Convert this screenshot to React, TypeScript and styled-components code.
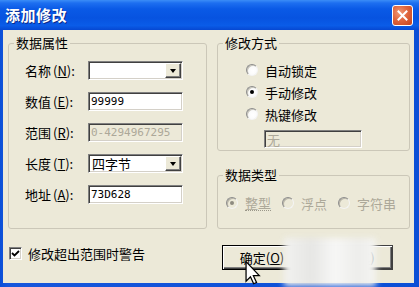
import React from "react";
import styled, { createGlobalStyle } from "styled-components";

const GlobalStyle = createGlobalStyle`
  html, body {
    margin: 0;
    padding: 0;
    background: #fff;
  }
  body {
    font-family: "Noto Sans CJK SC", "DejaVu Sans", sans-serif;
  }
`;

const Window = styled.div`
  position: relative;
  width: 419px;
  height: 287px;
  display: flex;
  flex-direction: column;
  background: linear-gradient(90deg, #0a4fd8 0%, #1656dc 2%, #0b4fd6 100%);
  overflow: hidden;
`;

const TitleBar = styled.div`
  flex: none;
  height: 30px;
  display: flex;
  align-items: center;
  justify-content: space-between;
  padding: 0 6px 0 5px;
  box-sizing: border-box;
  background: linear-gradient(
    180deg,
    #3b8df7 0%,
    #1d6ff0 10%,
    #0a5ae6 30%,
    #0753e0 60%,
    #0a5ce8 85%,
    #0648d2 100%
  );
`;

const Title = styled.span`
  color: #fff;
  font-size: 15px;
  font-weight: 700;
  letter-spacing: 0.5px;
  text-shadow: 1px 1px 0 #0a2a8a;
  line-height: 30px;
`;

const CloseButton = styled.div`
  width: 21px;
  height: 21px;
  box-sizing: border-box;
  border: 1px solid #fff;
  border-radius: 3px;
  display: flex;
  align-items: center;
  justify-content: center;
  background: radial-gradient(circle at 35% 35%, #f09a78 0%, #e0663e 45%, #c5411c 100%);
`;

const Body = styled.div`
  flex: 1;
  margin: 0 5px 4px 3px;
  padding: 5px 0 0 5px;
  background: #ece9d8;
  display: grid;
  grid-template-columns: 199px 193px;
  column-gap: 10px;
  align-items: start;
`;

const Column = styled.div`
  display: flex;
  flex-direction: column;
`;

const Group = styled.fieldset<{ $h: number; $mt?: number }>`
  margin: ${(p) => p.$mt ?? 0}px 0 0 0;
  padding: 0;
  height: ${(p) => p.$h}px;
  box-sizing: border-box;
  border: 1px solid #cbc7b8;
  border-radius: 3px;
  min-width: 0;
`;

const Legend = styled.legend`
  margin-left: 5px;
  padding: 0 2px;
  font-size: 13px;
  line-height: 16px;
  color: #000;
`;

const FieldGrid = styled.div`
  display: grid;
  grid-template-columns: 63px 95px;
  grid-auto-rows: 19px;
  row-gap: 12px;
  padding: 10px 0 0 16px;
  align-items: center;
`;

const Label = styled.label`
  font-size: 13px;
  line-height: 19px;
  color: #000;
  white-space: nowrap;
`;

const Mnemonic = styled.span`
  margin-left: 2px;
`;

const Field = styled.div<{ $disabled?: boolean }>`
  position: relative;
  height: 19px;
  box-sizing: border-box;
  border: 1px solid;
  border-color: #808080 #fff #fff #808080;
  box-shadow: inset 1px 1px 0 #404040, inset -1px -1px 0 #d4d0c8;
  background: ${(p) => (p.$disabled ? "#ece9d8" : "#fff")};
  display: flex;
  align-items: center;
  padding-left: 2px;
  font-family: "DejaVu Sans Mono", "Liberation Mono", monospace;
  font-size: 11px;
  color: ${(p) => (p.$disabled ? "#aca899" : "#000")};
`;

const ComboText = styled.span`
  flex: 1;
  font-family: "Noto Sans CJK SC", sans-serif;
  font-size: 13px;
  line-height: 17px;
  padding-left: 1px;
`;

const DropButton = styled.div`
  flex: none;
  width: 16px;
  height: 15px;
  margin-right: 1px;
  box-sizing: border-box;
  background: #ece9d8;
  border: 1px solid;
  border-color: #fff #404040 #404040 #fff;
  box-shadow: inset -1px -1px 0 #808080;
  display: flex;
  align-items: center;
  justify-content: center;
`;

const Arrow = styled.span`
  width: 0;
  height: 0;
  border-left: 3.5px solid transparent;
  border-right: 3.5px solid transparent;
  border-top: 4px solid #000;
`;

const CheckRow = styled.div`
  display: flex;
  align-items: center;
  gap: 6px;
  margin-top: 16px;
  padding-left: 1px;
  height: 16px;
  font-size: 13px;
  color: #000;
`;

const CheckBox = styled.span`
  width: 13px;
  height: 13px;
  box-sizing: border-box;
  border: 1px solid;
  border-color: #808080 #fff #fff #808080;
  box-shadow: inset 1px 1px 0 #404040, inset -1px -1px 0 #d4d0c8;
  background: #fff;
  display: flex;
  align-items: center;
  justify-content: center;
`;

const RadioList = styled.div`
  display: flex;
  flex-direction: column;
  gap: 6px;
  padding: 11px 0 0 28px;
`;

const RadioRow = styled.div<{ $disabled?: boolean }>`
  display: flex;
  align-items: center;
  gap: 7px;
  height: 16px;
  font-size: 13px;
  color: ${(p) => (p.$disabled ? "#aca899" : "#000")};
  white-space: nowrap;
`;

const RadioCircle = styled.span<{ $checked?: boolean; $disabled?: boolean }>`
  position: relative;
  flex: none;
  width: 12px;
  height: 12px;
  box-sizing: border-box;
  border-radius: 50%;
  border: 1px solid;
  border-color: #8d8d8d #f4f4f4 #f4f4f4 #8d8d8d;
  background: ${(p) =>
    p.$disabled
      ? "#ece9d8"
      : "radial-gradient(circle at 60% 60%, #fff 0%, #fafafa 55%, #e2e0d6 100%)"};
  box-shadow: inset 1px 1px 0 ${(p) => (p.$disabled ? "#b8b5a8" : "#c8c6bc")};

  &::after {
    content: "";
    display: ${(p) => (p.$checked ? "block" : "none")};
    position: absolute;
    left: 3px;
    top: 3px;
    width: 4px;
    height: 4px;
    border-radius: 50%;
    background: ${(p) => (p.$disabled ? "#8e8b80" : "#000")};
  }
`;

const HotkeyBox = styled(Field)`
  width: 98px;
  height: 18px;
  margin: 8px 0 0 46px;
  font-family: "Noto Sans CJK SC", sans-serif;
  font-size: 13px;
`;

const TypeRow = styled.div`
  display: flex;
  align-items: center;
  gap: 11px;
  padding: 12px 0 0 8px;
`;

const FocusText = styled.span`
  border-bottom: 1px dotted #9a978a;
  line-height: 14px;
`;

const ButtonRow = styled.div`
  display: flex;
  gap: 11px;
  margin-top: 16px;
  padding-left: 5px;
`;

const Button = styled.div<{ $default?: boolean }>`
  width: 80px;
  height: 25px;
  box-sizing: border-box;
  background: #ece9d8;
  border: 1px solid ${(p) => (p.$default ? "#000" : "#404040")};
  box-shadow: inset 1px 1px 0 #fff, inset -1px -1px 0 #404040,
    inset -2px -2px 0 #808080;
  display: flex;
  align-items: center;
  justify-content: center;
  font-size: 13px;
  color: #000;
  white-space: nowrap;
`;

const Smudge = styled.div`
  position: absolute;
  left: 284px;
  top: 238px;
  width: 92px;
  height: 48px;
  background: linear-gradient(
    90deg,
    #f2f2f0 0%,
    #e6e6e4 30%,
    #f7f7f6 55%,
    #ededeb 80%,
    #f4f4f2 100%
  );
  filter: blur(3px);
`;

const Cursor = styled.svg`
  position: absolute;
  left: 245px;
  top: 261px;
`;

const Mn = ({ k }: { k: string }) => (
  <Mnemonic>
    (<u>{k}</u>):
  </Mnemonic>
);

export default function App() {
  return (
    <>
      <GlobalStyle />
      <Window>
        <TitleBar>
          <Title>添加修改</Title>
          <CloseButton>
            <svg width="11" height="11" viewBox="0 0 11 11">
              <path
                d="M1.5 1.5 L9.5 9.5 M9.5 1.5 L1.5 9.5"
                stroke="#fff"
                strokeWidth="2"
                strokeLinecap="square"
              />
            </svg>
          </CloseButton>
        </TitleBar>

        <Body>
          <Column>
            <Group $h={194}>
              <Legend>数据属性</Legend>
              <FieldGrid>
                <Label>
                  名称<Mn k="N" />
                </Label>
                <Field>
                  <ComboText />
                  <DropButton>
                    <Arrow />
                  </DropButton>
                </Field>

                <Label>
                  数值<Mn k="E" />
                </Label>
                <Field>99999</Field>

                <Label>
                  范围<Mn k="R" />
                </Label>
                <Field $disabled>0-4294967295</Field>

                <Label>
                  长度<Mn k="T" />
                </Label>
                <Field>
                  <ComboText>四字节</ComboText>
                  <DropButton>
                    <Arrow />
                  </DropButton>
                </Field>

                <Label>
                  地址<Mn k="A" />
                </Label>
                <Field>73D628</Field>
              </FieldGrid>
            </Group>

            <CheckRow>
              <CheckBox>
                <svg width="9" height="9" viewBox="0 0 9 9">
                  <path d="M1 4 L3.5 6.5 L8 2" fill="none" stroke="#000" strokeWidth="1.8" />
                </svg>
              </CheckBox>
              修改超出范围时警告
            </CheckRow>
          </Column>

          <Column>
            <Group $h={116}>
              <Legend>修改方式</Legend>
              <RadioList>
                <RadioRow>
                  <RadioCircle />
                  自动锁定
                </RadioRow>
                <RadioRow>
                  <RadioCircle $checked />
                  手动修改
                </RadioRow>
                <RadioRow>
                  <RadioCircle />
                  热键修改
                </RadioRow>
              </RadioList>
              <HotkeyBox $disabled>无</HotkeyBox>
            </Group>

            <Group $h={62} $mt={16}>
              <Legend>数据类型</Legend>
              <TypeRow>
                <RadioRow $disabled>
                  <RadioCircle $checked $disabled />
                  <FocusText>整型</FocusText>
                </RadioRow>
                <RadioRow $disabled>
                  <RadioCircle $disabled />
                  浮点
                </RadioRow>
                <RadioRow $disabled>
                  <RadioCircle $disabled />
                  字符串
                </RadioRow>
              </TypeRow>
            </Group>

            <ButtonRow>
              <Button $default>
                确定(<u>O</u>)
              </Button>
              <Button>
                取消(<u>C</u>)
              </Button>
            </ButtonRow>
          </Column>
        </Body>

        <Smudge />
        <Cursor width="16" height="24" viewBox="0 0 12 19">
          <path
            d="M0.5 0.5 L0.5 16 L4 12.5 L6.5 18 L8.8 17 L6.3 11.6 L11 11.6 Z"
            fill="#fff"
            stroke="#000"
            strokeWidth="1"
            strokeLinejoin="miter"
          />
        </Cursor>
      </Window>
    </>
  );
}
